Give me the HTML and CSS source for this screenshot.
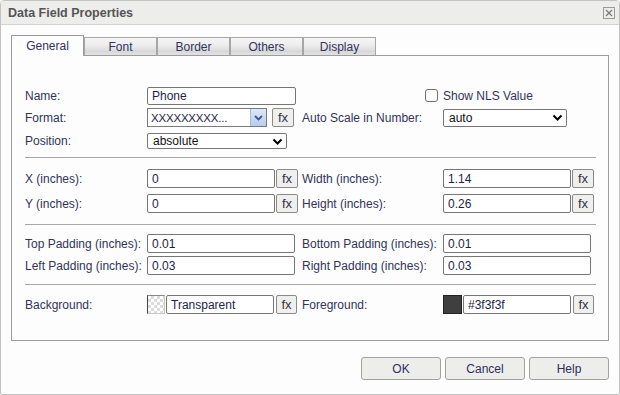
FILE: index.html
```html
<!DOCTYPE html>
<html>
<head>
<meta charset="utf-8">
<link rel="stylesheet" href="styles.css">
</head>
<body>
<div class="dialog">
  <div class="titlebar">
    <span class="title">Data Field Properties</span>
    <span class="close"><svg width="8" height="8" viewBox="0 0 8 8"><path d="M1 1L7 7M7 1L1 7" stroke="#7a7a7a" stroke-width="1.3" fill="none"/></svg></span>
  </div>
  <div class="body">
    <div class="tabs">
      <div class="tab active">General</div>
      <div class="tab">Font</div>
      <div class="tab">Border</div>
      <div class="tab">Others</div>
      <div class="tab">Display</div>
    </div>
    <div class="panel">
      <div class="row r-name">
        <div class="lbl">Name:</div>
        <div class="field"><div class="input w-name">Phone</div></div>
        <div class="lbl chk-cell"><span class="checkbox"></span></div>
        <div class="field">Show NLS Value</div>
      </div>
      <div class="row r-format">
        <div class="lbl">Format:</div>
        <div class="field">
          <div class="combo">
            <span class="combo-text">XXXXXXXXX...</span>
            <span class="combo-btn"><svg width="9" height="6" viewBox="0 0 9 6"><path d="M1 1L4.5 4.5L8 1" stroke="#3c5a8c" stroke-width="1.8" fill="none"/></svg></span>
          </div>
          <div class="fx fx-gap">fx</div>
        </div>
        <div class="lbl">Auto Scale in Number:</div>
        <div class="field">
          <div class="select w-auto"><span>auto</span><svg width="11" height="7" viewBox="0 0 11 7"><path d="M1.5 1.5L5.5 5.5L9.5 1.5" stroke="#000" stroke-width="2" fill="none"/></svg></div>
        </div>
      </div>
      <div class="row r-pos">
        <div class="lbl">Position:</div>
        <div class="field">
          <div class="select w-pos"><span>absolute</span><svg width="11" height="7" viewBox="0 0 11 7"><path d="M1.5 1.5L5.5 5.5L9.5 1.5" stroke="#000" stroke-width="2" fill="none"/></svg></div>
        </div>
        <div></div><div></div>
      </div>
      <div class="sep s1"></div>
      <div class="row r-x">
        <div class="lbl">X (inches):</div>
        <div class="field"><div class="input w-num">0</div><div class="fx">fx</div></div>
        <div class="lbl">Width (inches):</div>
        <div class="field"><div class="input w-num">1.14</div><div class="fx">fx</div></div>
      </div>
      <div class="row r-y">
        <div class="lbl">Y (inches):</div>
        <div class="field"><div class="input w-num">0</div><div class="fx">fx</div></div>
        <div class="lbl">Height (inches):</div>
        <div class="field"><div class="input w-num">0.26</div><div class="fx">fx</div></div>
      </div>
      <div class="sep s2"></div>
      <div class="row r-top">
        <div class="lbl">Top Padding (inches):</div>
        <div class="field"><div class="input w-pad">0.01</div></div>
        <div class="lbl">Bottom Padding (inches):</div>
        <div class="field"><div class="input w-pad">0.01</div></div>
      </div>
      <div class="row r-left">
        <div class="lbl">Left Padding (inches):</div>
        <div class="field"><div class="input w-pad">0.03</div></div>
        <div class="lbl">Right Padding (inches):</div>
        <div class="field"><div class="input w-pad">0.03</div></div>
      </div>
      <div class="sep s3"></div>
      <div class="row r-bg">
        <div class="lbl">Background:</div>
        <div class="field"><span class="swatch checker"></span><div class="input w-color">Transparent</div><div class="fx">fx</div></div>
        <div class="lbl">Foreground:</div>
        <div class="field"><span class="swatch dark"></span><div class="input w-color">#3f3f3f</div><div class="fx">fx</div></div>
      </div>
    </div>
    <div class="buttons">
      <div class="btn">OK</div>
      <div class="btn">Cancel</div>
      <div class="btn">Help</div>
    </div>
  </div>
</div>
</body>
</html>
```
FILE: styles.css
```css
* { box-sizing: border-box; }
html, body { margin: 0; padding: 0; background: #ffffff; }
body { font-family: "Liberation Sans", Arial, sans-serif; font-size: 12px; color: #33335a; }

.dialog {
  width: 620px; height: 395px;
  border: 1px solid #c2c2c2;
  border-radius: 4px 4px 2px 2px;
  background: #fcfdfc;
  overflow: hidden;
}
.titlebar {
  height: 24px;
  background: #ededeb;
  border-bottom: 1px solid #d2d2d0;
  display: flex; align-items: center; justify-content: space-between;
  padding: 0 4px 0 7px;
}
.title { font-weight: bold; font-size: 12.5px; color: #555555; }
.close {
  width: 12px; height: 12px;
  border: 1px solid #9a9a9a;
  display: flex; align-items: center; justify-content: center;
  margin-top: 1px;
}
.body { padding: 10px 10px 0 10px; }

.tabs { display: flex; height: 20px; align-items: flex-end; }
.tab {
  width: 73px; height: 18px;
  border: 1px solid #a6a6a6; border-bottom: none;
  background: linear-gradient(#f6f6f6 0%, #ececec 45%, #d8d8d8 80%, #e2e2e2 100%);
  display: flex; align-items: center; justify-content: center;
  font-size: 12px; padding-top: 1px;
  align-self: flex-start; margin-top: 2px;
}
.tab.active {
  height: 21px; margin-top: 0;
  background: #fcfdfc;
  border-color: #9a9a9a;
  position: relative; z-index: 1;
  padding-top: 0;
}

.panel {
  height: 286px;
  border: 1px solid #9c9c9c;
  padding: 30px 12px 0 13px;
  background: #fcfdfc;
}
.row {
  display: grid;
  grid-template-columns: 122px 155px 141px 1fr;
  align-items: center;
}
.lbl { white-space: nowrap; }
.field { display: flex; align-items: center; }
.chk-cell { display: flex; justify-content: flex-end; padding-right: 5px; }
.checkbox {
  width: 13px; height: 13px;
  border: 1px solid #6f6f6f; border-radius: 3px;
  background: #ffffff;
}

.r-name { height: 19px; }
.r-format { height: 19px; margin-top: 3px; }
.r-pos { height: 16px; margin-top: 6px; }
.s1 { margin-top: 8px; }
.r-x { height: 19px; margin-top: 11px; }
.r-y { height: 19px; margin-top: 6px; }
.s2 { margin-top: 11px; }
.r-top { height: 19px; margin-top: 9px; }
.r-left { height: 19px; margin-top: 3px; }
.s3 { margin-top: 9px; }
.r-bg { height: 19px; margin-top: 10px; }

.sep { height: 1px; background: #a8a8a8; }

.input {
  height: 19px;
  border: 1px solid #767676; border-radius: 2px;
  background: #ffffff;
  padding: 0 4px;
  display: flex; align-items: center;
  color: #1e1e46;
  white-space: nowrap; overflow: hidden;
}
.r-name .input { height: 18px; }
.w-name { width: 149px; }
.w-num { width: 128px; }
.w-pad { width: 148px; }
.w-color { width: 108px; margin-left: 1px; }

.fx {
  width: 22px; height: 19px;
  border: 1px solid #8a8a8a; border-radius: 2px;
  background: #efefed;
  display: flex; align-items: center; justify-content: center;
  font-size: 13px; color: #333344;
  margin-left: 1px;
}
.fx-gap { margin-left: 5px; }
.w-color + .fx { width: 21px; margin-left: 2px; }

.combo {
  width: 120px; height: 19px;
  border: 1px solid #7a7a7a;
  background: #ffffff;
  display: flex; align-items: stretch;
}
.combo-text { flex: 1; padding-left: 3px; display: flex; align-items: center; font-size: 11.5px; color: #1e1e46; letter-spacing: -0.2px; }
.combo-btn {
  width: 16px;
  background: linear-gradient(#dde8f8, #b8cdef);
  border-left: 1px solid #a8bde0;
  display: flex; align-items: center; justify-content: center;
}

.select {
  border: 1px solid #767676; border-radius: 2px;
  background: #ffffff;
  display: flex; align-items: center; justify-content: space-between;
  padding: 0 3px 0 5px;
  color: #111111;
}
.w-auto { width: 124px; height: 18px; }
.w-pos { width: 140px; height: 16px; }

.swatch { width: 18px; height: 19px; display: block; }
.checker {
  border: 1px solid #c8c8c8; border-left-color: #444; border-top-color: #888;
  background: repeating-conic-gradient(#dcdcdc 0 25%, #ffffff 0 50%) 0 0 / 6px 6px;
}
.dark { width: 19px; background: #3f3f3f; border: 1px solid #222; }

.buttons {
  display: flex; justify-content: flex-end; gap: 4px;
  margin-top: 16px;
}
.btn {
  width: 80px; height: 23px;
  border: 1px solid #a2a2a2; border-radius: 3px;
  background: #ededeb;
  display: flex; align-items: center; justify-content: center;
  color: #2e2e5a;
}
```
